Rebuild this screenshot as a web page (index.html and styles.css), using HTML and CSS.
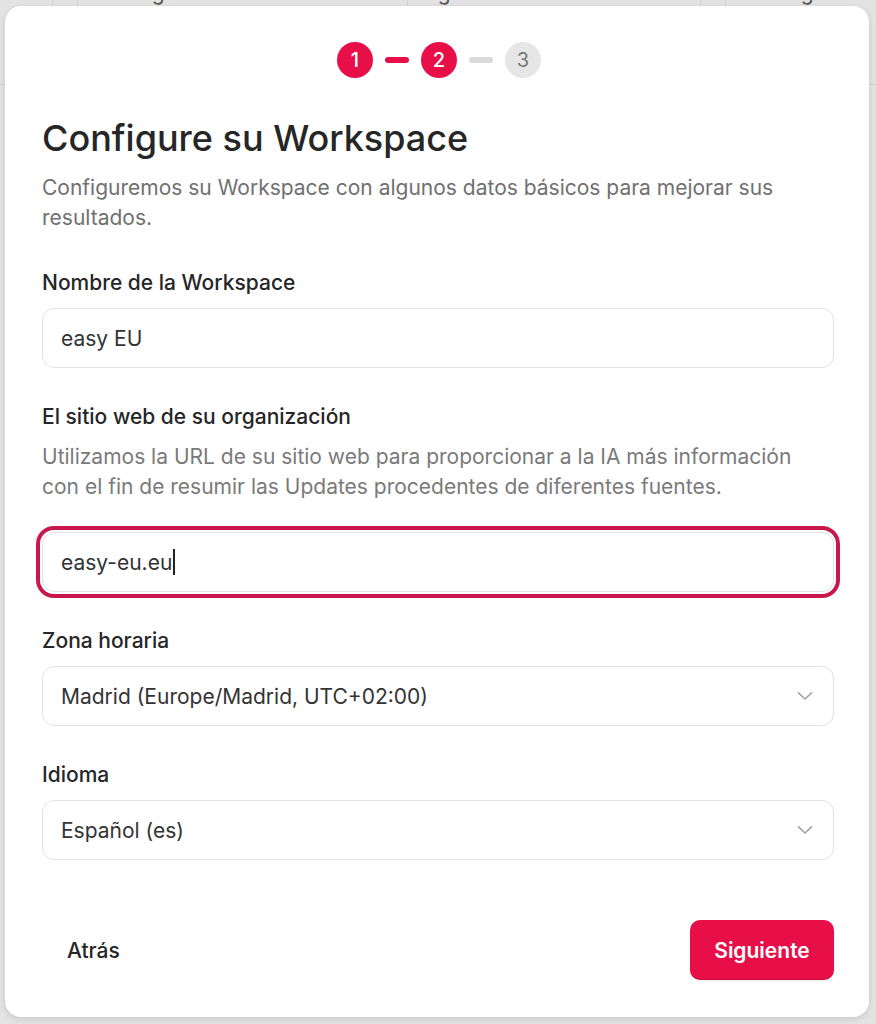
FILE: index.html
```html
<!DOCTYPE html>
<html lang="es">
<head>
<meta charset="utf-8">
<title>Configure su Workspace</title>
<link rel="stylesheet" href="styles.css">
</head>
<body>
<div class="backdrop">
  <div class="bg-row">
    <div class="bg-cell c1"></div>
    <div class="bg-cell c2"></div>
    <div class="bg-cell c3"><span>Seguimiento</span></div>
    <div class="bg-cell c4"><span>Seguimiento</span></div>
    <div class="bg-cell c5"></div>
    <div class="bg-cell c6"><span>Seguimiento</span></div>
  </div>
</div>

<div class="modal">
  <div class="stepper">
    <span class="step done">1</span>
    <span class="dash on"></span>
    <span class="step done">2</span>
    <span class="dash"></span>
    <span class="step">3</span>
  </div>

  <h1 class="title">Configure su Workspace</h1>
  <p class="subtitle">Configuremos su Workspace con algunos datos básicos para mejorar sus resultados.</p>

  <div class="field">
    <label class="label">Nombre de la Workspace</label>
    <div class="input">easy EU</div>
  </div>

  <div class="field">
    <label class="label">El sitio web de su organización</label>
    <p class="help">Utilizamos la URL de su sitio web para proporcionar a la IA más información con el fin de resumir las Updates procedentes de diferentes fuentes.</p>
    <div class="input focused">easy-eu.eu<span class="caret"></span></div>
  </div>

  <div class="field">
    <label class="label">Zona horaria</label>
    <div class="input select">
      <span>Madrid (Europe/Madrid, UTC+02:00)</span>
      <svg class="chev" width="16" height="10" viewBox="0 0 16 10"><path d="M1.5 1.8 L8 8 L14.5 1.8" fill="none" stroke="#a3a3a3" stroke-width="1.6" stroke-linecap="round" stroke-linejoin="round"/></svg>
    </div>
  </div>

  <div class="field">
    <label class="label">Idioma</label>
    <div class="input select">
      <span>Español (es)</span>
      <svg class="chev" width="16" height="10" viewBox="0 0 16 10"><path d="M1.5 1.8 L8 8 L14.5 1.8" fill="none" stroke="#a3a3a3" stroke-width="1.6" stroke-linecap="round" stroke-linejoin="round"/></svg>
    </div>
  </div>

  <div class="footer">
    <button class="btn ghost">Atrás</button>
    <button class="btn primary">Siguiente</button>
  </div>
</div>
</body>
</html>
```

FILE: styles.css
```css
* { box-sizing: border-box; }

html, body {
  margin: 0;
  padding: 0;
}

body {
  width: 876px;
  height: 1024px;
  overflow: hidden;
  background: #e3e3e3;
  font-family: Inter, "Noto Sans", "Liberation Sans", sans-serif;
  color: #262626;
  position: relative;
}

/* background page (dimmed) */
.backdrop {
  height: 85px;
  border-bottom: 1px solid #d2d2d2;
  overflow: hidden;
}

.bg-row {
  display: flex;
  height: 85px;
}

.bg-cell {
  border-right: 1px solid #d2d2d2;
  font-size: 21px;
  line-height: 25px;
  color: #555;
  overflow: hidden;
  white-space: nowrap;
}
.bg-cell span {
  display: block;
  margin-top: -20px;
}
.c1 { width: 53px; }
.c2 { width: 25px; }
.c3 { width: 330px; padding-left: 48px; }
.c4 { width: 293px; padding-left: 4px; }
.c5 { width: 25px; }
.c6 { flex: 1; border-right: none; padding-left: 49px; }

/* modal (overlay) */
.modal {
  position: absolute;
  top: 6px;
  left: 5px;
  width: 864px;
  height: 1011px;
  background: #fff;
  border-radius: 16px;
  box-shadow: 0 2px 6px rgba(0, 0, 0, 0.12);
  padding: 36px 35px 0 37px;
}

.stepper {
  display: flex;
  align-items: center;
  justify-content: center;
  gap: 12px;
  padding-left: 2px;
}

.step {
  width: 36px;
  height: 36px;
  border-radius: 50%;
  background: #e6e6e6;
  color: #7a7a7a;
  font-size: 20px;
  display: flex;
  align-items: center;
  justify-content: center;
}

.step.done {
  background: #e80f48;
  color: #fff;
  font-weight: 500;
}

.dash {
  width: 24px;
  height: 6px;
  border-radius: 3px;
  background: #dadada;
}
.dash.on { background: #e80f48; }

.title {
  margin: 40px 0 0;
  font-size: 36px;
  line-height: 40px;
  font-weight: 500;
  color: #262626;
}

.subtitle {
  margin: 15px 0 0;
  font-size: 21px;
  line-height: 30px;
  color: #707070;
}

.field {
  margin-top: 35px;
}
.subtitle + .field { margin-top: 36px; }

.label {
  display: block;
  font-size: 21px;
  line-height: 28px;
  font-weight: 500;
  color: #262626;
  margin-bottom: 11px;
}

.help {
  margin: 1px 0 30px;
  font-size: 21px;
  line-height: 30px;
  color: #7a7a7a;
}

.input {
  height: 60px;
  border: 1px solid #e2e2e2;
  border-radius: 12px;
  padding: 0 18px;
  display: flex;
  align-items: center;
  font-size: 21px;
  color: #333;
  background: #fff;
}

.input.focused {
  box-shadow: 0 0 0 2px #fff, 0 0 0 6px #c8184b;
}

.caret {
  display: inline-block;
  width: 2px;
  height: 26px;
  background: #222;
  margin-left: 1px;
}

.select {
  justify-content: space-between;
  padding-right: 20px;
}

.chev { display: block; }

.footer {
  margin-top: 60px;
  display: flex;
  justify-content: space-between;
  align-items: center;
}

.btn {
  font-family: inherit;
  font-size: 21px;
  height: 60px;
  border-radius: 10px;
  border: none;
  cursor: pointer;
}

.btn.ghost {
  background: transparent;
  color: #262626;
  font-weight: 500;
  padding: 0 25px;
}

.btn.primary {
  width: 144px;
  background: #e80f48;
  color: #fff;
  font-weight: 600;
  box-shadow: inset 0 -1px 0 rgba(0,0,0,0.12), 0 1px 2px rgba(0,0,0,0.08);
}
```
